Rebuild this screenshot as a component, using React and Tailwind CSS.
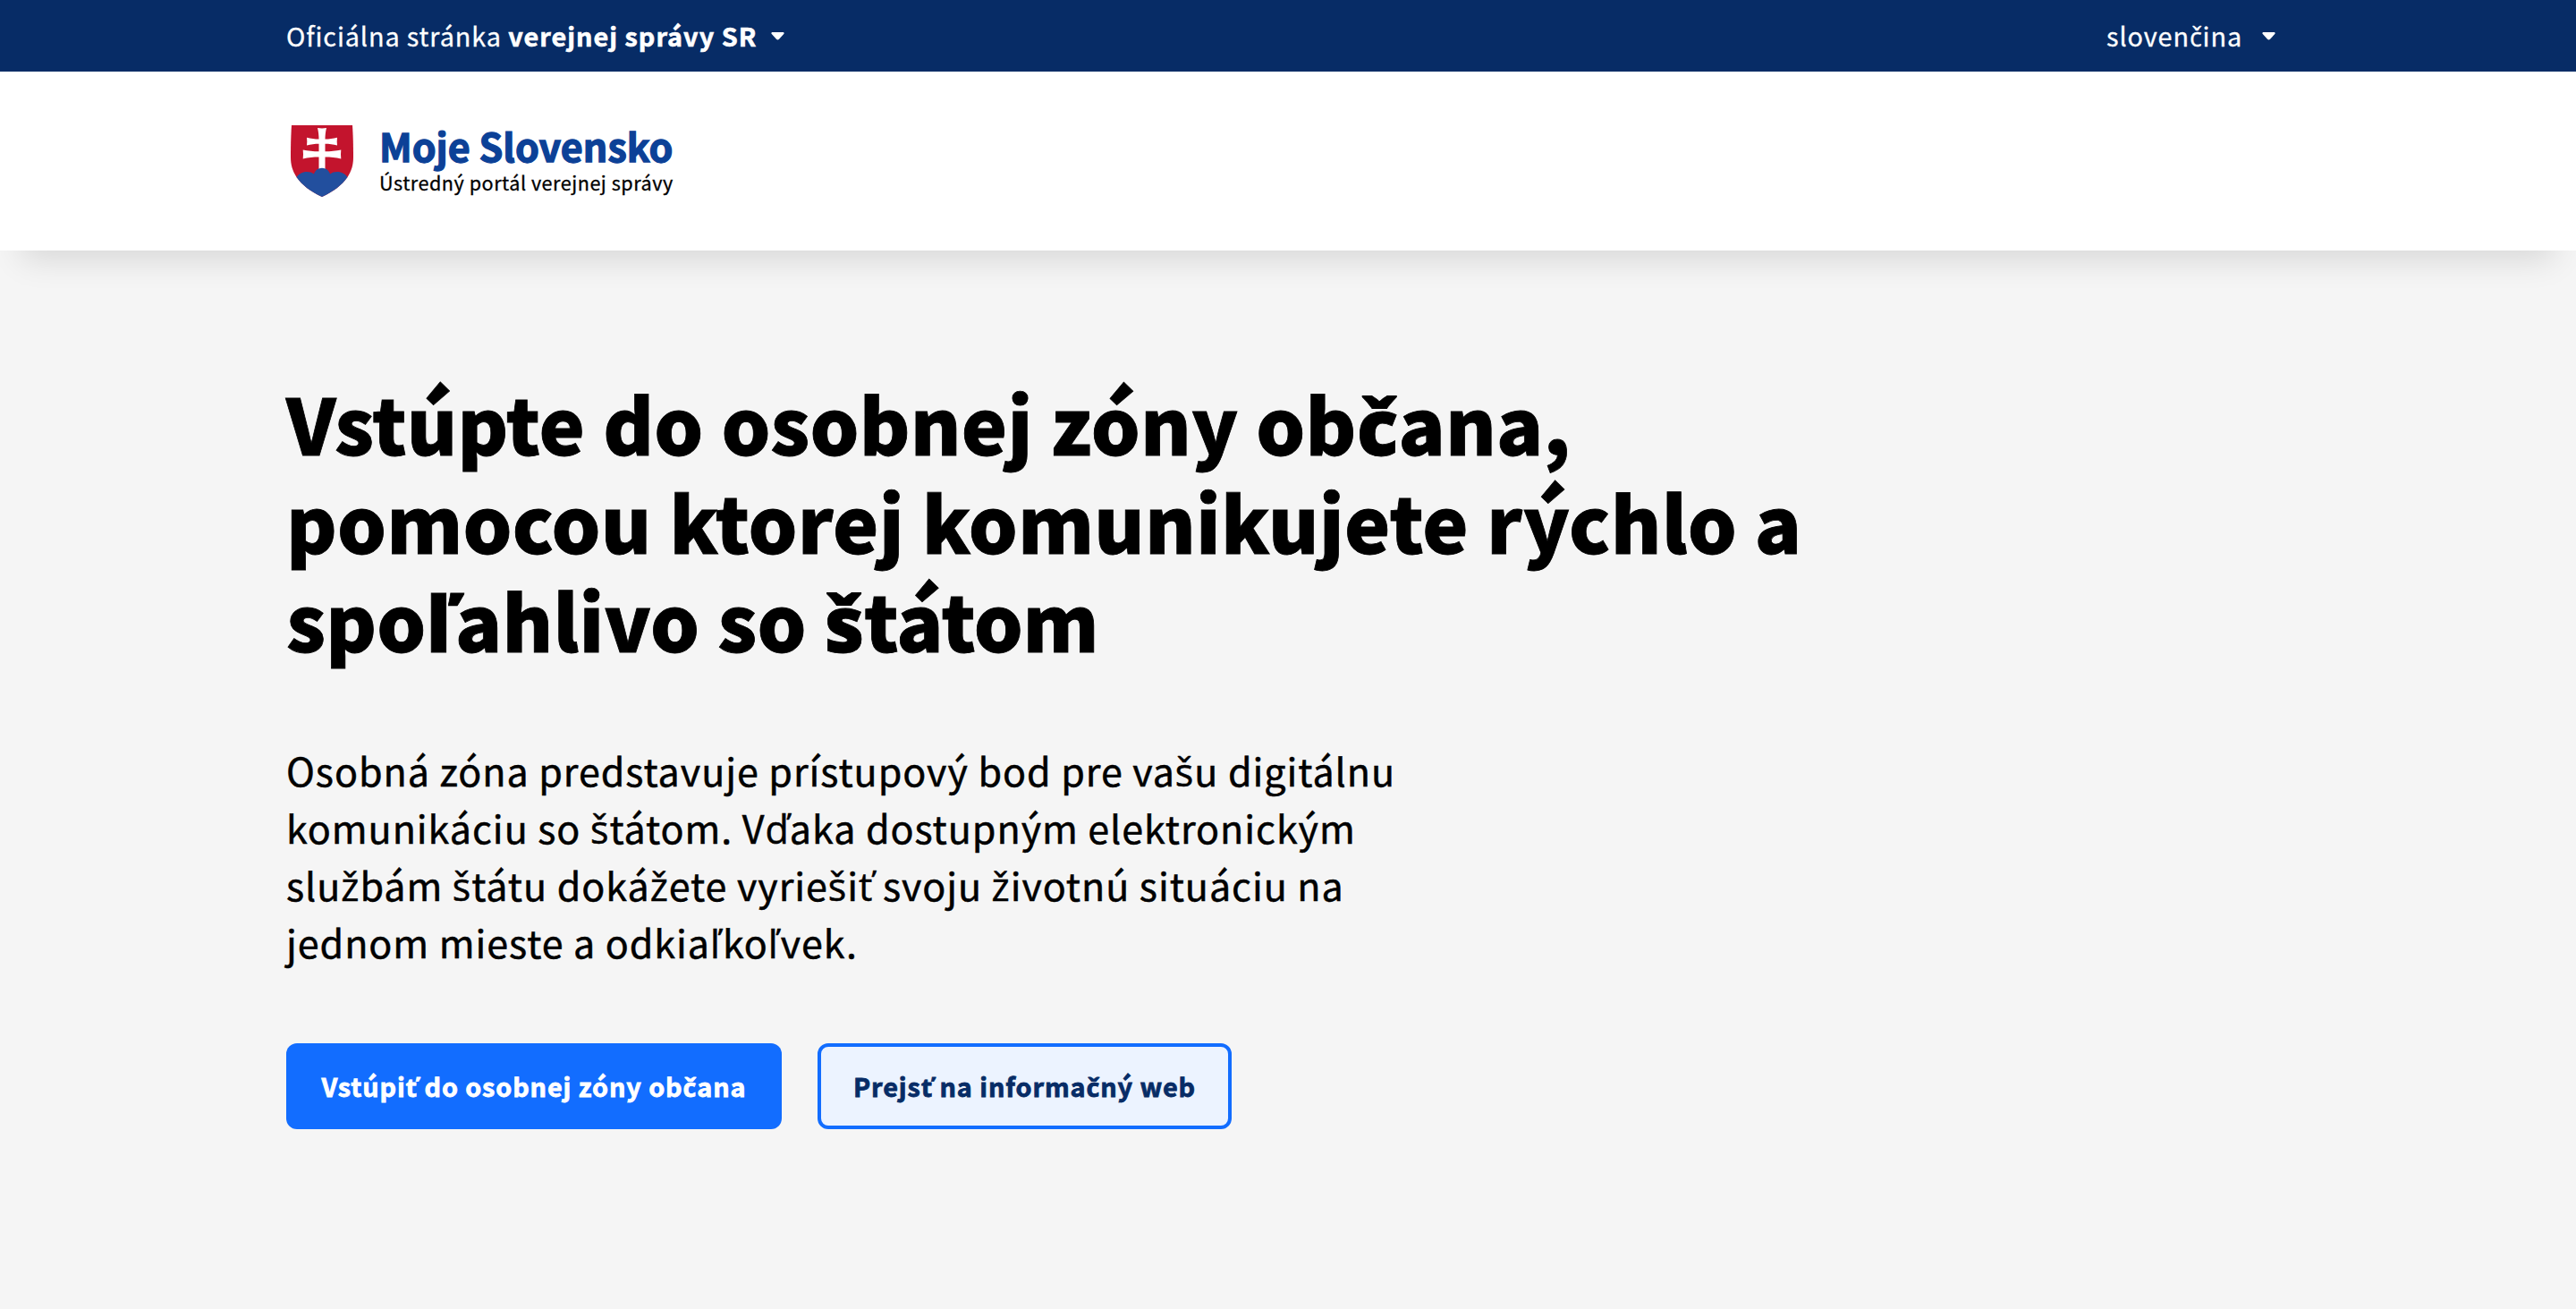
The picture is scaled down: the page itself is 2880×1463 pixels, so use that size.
import { Fragment } from "react";

const CARON_LETTERS = /([čďľťžšČĎĽŤŽŠ])/;

/* Sets letters with a caron in a face that has them precomposed. */
function Text({ children }) {
  return children.split(CARON_LETTERS).map((part, i) =>
    i % 2 ? (
      <span
        key={i}
        className={
          part === "ľ"
            ? "mr-[0.05em] font-['Open_Sans',sans-serif] leading-none"
            : "font-['Open_Sans',sans-serif] leading-none"
        }
      >
        {part}
      </span>
    ) : (
      <Fragment key={i}>{part}</Fragment>
    ),
  );
}

function Caret({ className }) {
  return (
    <svg viewBox="0 0 15 10" className={className} fill="currentColor">
      <path d="M1.3 0h12.4c1.1 0 1.7 1.3.9 2.1L9.100 8.200c-.9.9-2.300.9-3.200 0L.4 2.100C-.4 1.300.2 0 1.300 0z" />
    </svg>
  );
}

function Shield() {
  return (
    <svg viewBox="0 0 70 80" className="h-20 w-[70px]">
      <path d="M1 0H69C69.600 9 70 20 70 36C70 44 68 51 63.500 58C57 67 48 74 35 80C22 74 13 67 6.500 58C2 51 0 44 0 36C0 20 .4 9 1 0Z" fill="#c3142d" />
      <path d="M6.500 58C9 54.500 13 52 18 52C21 52 24 52.800 26 54.500C27.500 50.500 31 47.800 35 47.800C39 47.800 42.500 50.500 44 54.500C46 52.800 49 52 52 52C57 52 61 54.500 63.500 58C57 67 48 74 35 80C22 74 13 67 6.500 58Z" fill="#224f9e" />
      <path d="M30 3C33 3.500 37 3.500 40 3C39 7 38.600 11 38.500 15.600C43 15.600 47.500 15 52 13.800C51.600 16.800 51.600 19.600 52 22.600C47.500 21.400 43 20.800 38.500 20.800V29.200C44.500 29.200 50.500 28.600 56.300 27.400C55.900 30.600 55.900 34 56.300 37.400C50.500 36 44.500 35.500 38.500 35.500V49H31.500V35.500C25.500 35.500 19.500 36 13.700 37.400C14.100 34 14.100 30.600 13.700 27.400C19.500 28.600 25.500 29.200 31.500 29.200V20.800C27 20.800 22.500 21.400 18 22.600C18.400 19.600 18.400 16.800 18 13.800C22.500 15 27 15.600 31.500 15.600C31.400 11 31 7 30 3Z" fill="#fff" />
      <path d="M26 56C27 50.500 31 47.800 35 47.800C39 47.800 43 50.500 44 56Z" fill="#224f9e" />
    </svg>
  );
}

export default function App() {
  return (
    <div className="flex min-h-[1463px] w-full flex-col bg-[#f5f5f5] font-['Noto_Sans_CJK_SC',sans-serif] text-black [-webkit-text-stroke:0.3px_currentColor]">
      <div className="h-20 bg-[#072c66] text-white">
        <div className="mx-auto flex h-full w-[2240px] items-center justify-between text-[28.800px] leading-10 tracking-[0.9px]">
          <div className="flex items-center">
            <span className="whitespace-pre">
              Oficiálna stránka <b className="font-bold tracking-[1px] [-webkit-text-stroke:0.6px_currentColor]">verejnej správy SR</b>
            </span>
            <Caret className="mt-0.5 ml-4 h-[9.500px] w-[15px]" />
          </div>
          <div className="flex items-center pr-4">
            <span>
              <Text>slovenčina</Text>
            </span>
            <Caret className="mt-0.5 ml-[22px] h-[9.500px] w-[15px]" />
          </div>
        </div>
      </div>

      <header className="h-[200px] bg-white shadow-[0_34px_34px_-24px_rgba(0,0,0,0.12)]">
        <div className="mx-auto flex w-[2240px] items-start gap-[29px] pt-[60px] pl-[5px]">
          <Shield />
          <div className="flex flex-col">
            <span className="text-[43px] leading-[44px] font-bold text-[#0c4197] [-webkit-text-stroke:1.300px_currentColor]">
              Moje Slovensko
            </span>
            <span className="text-[21.600px] leading-[40px] tracking-[0.52px]">
              Ústredný portál verejnej správy
            </span>
          </div>
        </div>
      </header>

      <main className="mx-auto w-[2240px] pt-[137px]">
        <h1 className="text-[86.400px] leading-[110px] font-black tracking-[0.2px] [-webkit-text-stroke:0.8px_currentColor]">
          <Text>Vstúpte do osobnej zóny občana,</Text>
          <br />
          pomocou ktorej komunikujete rýchlo a
          <br />
          <Text>spoľahlivo so </Text>
          <span className="tracking-[-0.3px]">
            <Text>štátom</Text>
          </span>
        </h1>
        <p className="mt-[81px] text-[43px] leading-[64px] tracking-[0.95px] [-webkit-text-stroke:0.5px_currentColor]">
          <Text>Osobná zóna predstavuje prístupový bod pre vašu digitálnu</Text>
          <br />
          <Text>komunikáciu so štátom. Vďaka dostupným elektronickým</Text>
          <br />
          <Text>službám štátu dokážete vyriešiť svoju životnú situáciu na</Text>
          <br />
          <Text>jednom mieste a odkiaľkoľvek.</Text>
        </p>
        <div className="mt-[82px] flex gap-10 text-[28.800px] font-bold tracking-[0.9px] [-webkit-text-stroke:0.800px_currentColor]">
          <button className="flex h-24 w-[554px] items-center justify-center rounded-xl bg-[#126dff] leading-10 text-white">
            <span>
              <Text>Vstúpiť do osobnej zóny občana</Text>
            </span>
          </button>
          <button className="flex h-24 w-[463px] items-center justify-center rounded-xl border-4 border-[#126dff] bg-[#ecf3ff] leading-10 text-[#072c66]">
            <span>
              <Text>Prejsť na informačný web</Text>
            </span>
          </button>
        </div>
      </main>
    </div>
  );
}
